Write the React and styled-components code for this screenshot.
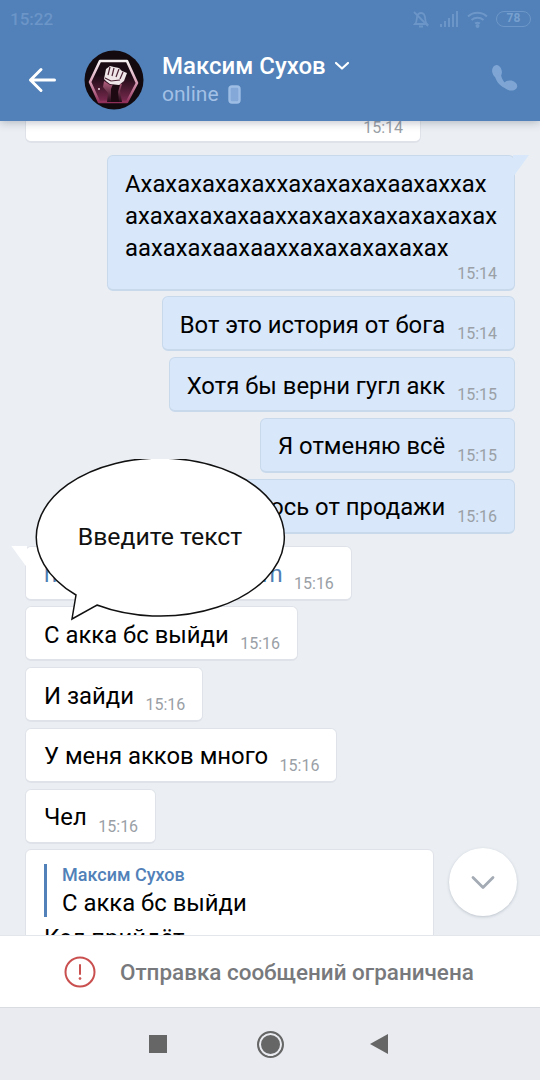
import React from "react";
import styled, { createGlobalStyle } from "styled-components";

const GlobalStyle = createGlobalStyle`
  html, body {
    margin: 0;
    padding: 0;
    background: #ebeff4;
  }
  * {
    box-sizing: border-box;
  }
`;

const messages = [
  { id: 1, out: false, text: "", time: "15:14", clipped: true, width: 396 },
  {
    id: 2,
    out: true,
    time: "15:14",
    tail: true,
    lines: ["Ахахахахахаххахахахахаахаххах", "ахахахахахааххахахахахахахахах", "аахахахаахааххахахахахахах"],
  },
  { id: 3, out: true, text: "Вот это история от бога", time: "15:14" },
  { id: 4, out: true, text: "Хотя бы верни гугл акк", time: "15:15" },
  { id: 5, out: true, text: "Я отменяю всё", time: "15:15" },
  { id: 6, out: true, text: "Отказываюсь от продажи", time: "15:16" },
  { id: 7, out: false, text: "https://my.google.com", time: "15:16", link: true, tail: true, first: true },
  { id: 8, out: false, text: "С акка бс выйди", time: "15:16" },
  { id: 9, out: false, text: "И зайди", time: "15:16" },
  { id: 10, out: false, text: "У меня акков много", time: "15:16" },
  { id: 11, out: false, text: "Чел", time: "15:16" },
];

const App = () => {
  return (
    <Page>
      <GlobalStyle />
      <Header>
        <StatusBar>
          <Clock>15:22</Clock>
          <StatusIcons>
            <svg width="20" height="20" viewBox="0 0 20 20" fill="none" stroke="#6c95c8" strokeWidth="1.8">
              <path d="M4 15c2-2 1.500-4 2-7 .5-2.500 2-4 4-4s3.500 1.500 4 4c.5 3 0 5 2 7z" />
              <path d="M8 17.500h4M3 3l14 14" />
            </svg>
            <svg width="20" height="18" viewBox="0 0 20 18" fill="#6c95c8">
              <rect x="1" y="14" width="2" height="3" />
              <rect x="5" y="11" width="2" height="6" />
              <rect x="9" y="8" width="2" height="9" />
              <rect x="13" y="4" width="2" height="13" />
              <rect x="17" y="1" width="2" height="16" />
            </svg>
            <svg width="21" height="17" viewBox="0 0 21 17" fill="none" stroke="#6e97c9" strokeWidth="2">
              <path d="M1 5.500c5.500-5 13.500-5 19 0M4.500 9c3.500-3 8.500-3 12 0" />
              <path d="M8 12.500c1.500-1 3.500-1 5 0" />
              <circle cx="10.500" cy="15" r="1" fill="#6e97c9" />
            </svg>
            <Battery>78</Battery>
          </StatusIcons>
        </StatusBar>
        <Toolbar>
          <BackButton>
            <svg width="28" height="26" viewBox="0 0 28 26" fill="none" stroke="#fff" strokeWidth="3" strokeLinecap="round" strokeLinejoin="round">
              <path d="M26.500 13H2.500M13 2.500 2.500 13 13 23.500" />
            </svg>
          </BackButton>
          <svg width="60" height="60" viewBox="0 0 60 60">
            <defs>
              <linearGradient id="shield" x1="0" y1="0" x2="0" y2="1">
                <stop offset="0" stopColor="#f6f0f2" />
                <stop offset="0.5" stopColor="#dba3b9" />
                <stop offset="1" stopColor="#8f2f5a" />
              </linearGradient>
              <linearGradient id="inner" x1="0" y1="0" x2="0" y2="1">
                <stop offset="0.35" stopColor="#1a0a13" />
                <stop offset="1" stopColor="#7c2a50" />
              </linearGradient>
              <linearGradient id="arm" x1="0" y1="0" x2="0" y2="1">
                <stop offset="0" stopColor="#b56080" />
                <stop offset="1" stopColor="#240a18" />
              </linearGradient>
            </defs>
            <circle cx="30" cy="30" r="29.500" fill="#120a0f" />
            <path d="M16 11h27l10 22-10 19H15L6 32z" fill="url(#inner)" stroke="url(#shield)" strokeWidth="2.600" strokeLinejoin="round" />
            <path d="M20 31l6 4 12-1-2 7 2 11H23l1-9-5-6z" fill="url(#arm)" />
            <path d="M27 39l2-5 7 1-2 7 1 10h-8z" fill="#1c0912" />
            <path d="M20 29l2-10 4-3 4 1 5 1 3 3 5 2-3 8-5 4-9-1-4-3z" fill="#eee6e8" />
            <path d="M26 17l-2 8M30 18l-2 8M35 19l-3 8M39 22l-3 7M21 28l6 3 9-1" stroke="#4a2235" strokeWidth="1.200" fill="none" />
            <circle cx="15" cy="39" r="1" fill="#f2d9e2" />
          </svg>
          <Peer>
            <PeerName>
              Максим Сухов
              <svg width="16" height="10" viewBox="0 0 16 10" fill="none" stroke="#fff" strokeWidth="2.200" strokeLinecap="round" strokeLinejoin="round">
                <path d="M2 2l6 5.500L14 2" />
              </svg>
            </PeerName>
            <PeerStatus>
              online
              <svg width="13" height="19" viewBox="0 0 13 19" fill="none">
                <rect x="1.500" y="1.500" width="10" height="16" rx="2.500" fill="#84a8d8" stroke="#9dbde4" strokeWidth="2.400" />
              </svg>
            </PeerStatus>
          </Peer>
          <CallButton>
            <svg width="27" height="26" viewBox="0 0 27 26" fill="#7fa5d4">
              <ellipse cx="6" cy="6.500" rx="4.800" ry="6.500" transform="rotate(-12 6 6.500)" />
              <ellipse cx="19.500" cy="20.500" rx="6.800" ry="5" transform="rotate(12 19.500 20.500)" />
              <path d="M4 11c1 6 6 11 12 13l2-4c-4-1-7-5-8-10z" />
            </svg>
          </CallButton>
        </Toolbar>
      </Header>

      <History>
        {messages.map((m) => (
          <Bubble key={m.id} $out={m.out} $tail={m.tail} $first={m.first} $clipped={m.clipped} $width={m.width} $multi={!!m.lines}>
            {m.lines ? (
              <Lines>
                {m.lines.map((line) => (
                  <div key={line}>{line}</div>
                ))}
              </Lines>
            ) : (
              <BubbleText $link={m.link}>{m.text}</BubbleText>
            )}
            <Time $clipped={m.clipped}>{m.time}</Time>
          </Bubble>
        ))}
        <ReplyBubble>
          <Quote>
            <QuoteAuthor>Максим Сухов</QuoteAuthor>
            <QuoteText>С акка бс выйди</QuoteText>
          </Quote>
          <ReplyText>Кел прийдёт</ReplyText>
        </ReplyBubble>
        <ScrollDown>
          <svg width="24" height="15" viewBox="0 0 24 15" fill="none" stroke="#a4abb4" strokeWidth="2.800" strokeLinecap="round" strokeLinejoin="round">
            <path d="M2 2.500l10 10 10-10" />
          </svg>
        </ScrollDown>
        <Balloon>
          <svg width="256" height="166" viewBox="0 0 256 166">
            <path d="M41 136A124 79 0 1 1 62 146L37 160Z" fill="#fff" stroke="#111" strokeWidth="1.500" strokeLinejoin="miter" />
          </svg>
          <BalloonText>Введите текст</BalloonText>
        </Balloon>
      </History>

      <Notice>
        <svg width="32" height="32" viewBox="0 0 32 32" fill="none" stroke="#c9504f">
          <circle cx="16" cy="16" r="14.500" strokeWidth="2" />
          <path d="M16 9v9" strokeWidth="2" strokeLinecap="round" />
          <circle cx="16" cy="22.500" r="1" fill="#c9504f" strokeWidth="0.800" />
        </svg>
        <NoticeText>Отправка сообщений ограничена</NoticeText>
      </Notice>

      <NavBar>
        <NavSquare />
        <NavCircle />
        <NavBack />
      </NavBar>
    </Page>
  );
};

export default App;

const Page = styled.div`
  width: 540px;
  height: 1080px;
  display: flex;
  flex-direction: column;
  overflow: hidden;
  background: #ebeff4;
  font-family: Roboto, "Noto Sans", sans-serif;
  color: #000;
`;

const Header = styled.header`
  position: relative;
  z-index: 2;
  height: 121px;
  flex-shrink: 0;
  background: #5181b8;
  box-shadow: 0 2px 8px rgba(60, 70, 90, 0.3);
`;

const StatusBar = styled.div`
  height: 38px;
  padding: 0 0 0 10px;
  display: flex;
  align-items: center;
  justify-content: space-between;
`;

const Clock = styled.div`
  font-size: 17px;
  font-weight: 500;
  color: #6c95c8;
`;

const StatusIcons = styled.div`
  display: flex;
  align-items: center;
  gap: 8px;
  padding-right: 9px;
`;

const Battery = styled.div`
  width: 35px;
  height: 16px;
  border: 1.500px solid #6e97c9;
  border-radius: 8px;
  font-size: 12px;
  font-weight: 700;
  line-height: 13px;
  text-align: center;
  color: #78a0cf;
`;

const Toolbar = styled.div`
  height: 83px;
  padding: 0 22px 0 28px;
  display: flex;
  align-items: center;
`;

const BackButton = styled.div`
  width: 56px;
  display: flex;
  align-items: center;
`;

const Peer = styled.div`
  flex: 1;
  margin-left: 18px;
  display: flex;
  flex-direction: column;
`;

const PeerName = styled.div`
  display: flex;
  align-items: center;
  gap: 8px;
  font-size: 24px;
  font-weight: 500;
  line-height: 29px;
  color: #fff;
`;

const PeerStatus = styled.div`
  display: flex;
  align-items: center;
  gap: 9px;
  font-size: 21px;
  line-height: 27px;
  color: #a3c0e6;
`;

const CallButton = styled.div`
  display: flex;
  align-items: center;
  margin-top: -3px;
`;

const History = styled.main`
  position: relative;
  flex: 1;
  min-height: 0;
  overflow: hidden;
  padding: 0 25px;
  display: flex;
  flex-direction: column;
  gap: 5.750px;
`;

const Bubble = styled.div`
  position: relative;
  flex-shrink: 0;
  align-self: ${(props) => (props.$out ? "flex-end" : "flex-start")};
  width: ${(props) => (props.$width ? `${props.$width}px` : "auto")};
  height: ${(props) => (props.$multi ? "135.500px" : "55px")};
  margin-top: ${(props) => {
    if (props.$clipped) return "-33px";
    if (props.$first || props.$multi) return "6.250px";
    return "0";
  }};
  padding: ${(props) => {
    if (props.$multi) return "12px 17px 0";
    return props.$out ? "0 17px" : "0 17px 0 18px";
  }};
  display: flex;
  flex-direction: ${(props) => (props.$multi ? "column" : "row")};
  align-items: ${(props) => (props.$multi ? "flex-end" : "flex-start")};
  justify-content: ${(props) => (props.$clipped ? "flex-end" : "flex-start")};
  gap: ${(props) => {
    if (props.$multi) return "0";
    return props.$out ? "12px" : "11.500px";
  }};
  border-radius: 6px;
  border: 1px solid ${(props) => (props.$out ? "#c8d9ec" : "#dfe3e9")};
  border-bottom-width: 2px;
  background: ${(props) => (props.$out ? "#d8e7f9" : "#fff")};

  &::after {
    content: ${(props) => (props.$tail ? '""' : "none")};
    position: absolute;
    top: -1px;
    ${(props) => (props.$out ? "left: calc(100% - 1px);" : "right: calc(100% - 1px);")}
    width: 16px;
    height: 22px;
    background: ${(props) => (props.$out ? "#d8e7f9" : "#fff")};
    clip-path: ${(props) =>
      props.$out ? "polygon(0 0, 100% 0, 0 100%)" : "polygon(0 0, 100% 0, 100% 100%)"};
  }
`;

const BubbleText = styled.div`
  padding-top: 12.500px;
  font-size: 23.850px;
  line-height: 30px;
  white-space: nowrap;
  letter-spacing: ${(props) => (props.$link ? "-0.08px" : "0")};
  color: ${(props) => (props.$link ? "#4f7fb5" : "#000")};
`;

const Lines = styled.div`
  align-self: flex-start;
  font-size: 23.850px;
  line-height: 32px;
  white-space: nowrap;
`;

const Time = styled.div`
  font-size: 16px;
  line-height: 20px;
  color: #9aa0a6;
  align-self: flex-end;
  padding-bottom: ${(props) => (props.$clipped ? "3px" : "5px")};
`;

const ReplyBubble = styled.div`
  flex-shrink: 0;
  width: 409px;
  padding: 14px 18px;
  border-radius: 6px;
  border: 1px solid #dfe3e9;
  background: #fff;
`;

const Quote = styled.div`
  border-left: 3px solid #5181b8;
  padding-left: 15px;
`;

const QuoteAuthor = styled.div`
  font-size: 18px;
  font-weight: 500;
  line-height: 22px;
  color: #5181b8;
`;

const QuoteText = styled.div`
  margin-top: 3px;
  font-size: 23.850px;
  line-height: 28px;
`;

const ReplyText = styled.div`
  margin-top: 6px;
  font-size: 23.850px;
  line-height: 30px;
`;

const ScrollDown = styled.div`
  position: absolute;
  left: 449px;
  top: 727px;
  width: 68px;
  height: 68px;
  display: flex;
  align-items: center;
  justify-content: center;
  border-radius: 50%;
  background: #fff;
  box-shadow: 0 1px 3px rgba(60, 70, 90, 0.25);
`;

const Balloon = styled.div`
  position: absolute;
  left: 35px;
  top: 338px;
  width: 256px;
  height: 166px;
`;

const BalloonText = styled.div`
  position: absolute;
  left: 0;
  right: 6px;
  top: 62px;
  text-align: center;
  font-size: 24.800px;
  line-height: 32px;
  color: #111;
`;

const Notice = styled.div`
  height: 73px;
  flex-shrink: 0;
  padding-left: 64px;
  display: flex;
  align-items: center;
  gap: 24px;
  background: #fff;
  border-top: 1px solid #e3e6ea;
  border-bottom: 1px solid #d9dce1;
`;

const NoticeText = styled.div`
  font-size: 22.450px;
  font-weight: 500;
  color: #77797c;
`;

const NavBar = styled.nav`
  height: 72px;
  flex-shrink: 0;
  padding-left: 149px;
  display: flex;
  align-items: center;
  background: #e9ebf0;
`;

const NavSquare = styled.div`
  width: 18px;
  height: 18px;
  background: #666;
`;

const NavCircle = styled.div`
  width: 27px;
  height: 27px;
  margin-left: 90px;
  border-radius: 50%;
  background: #666;
  border: 2px solid #666;
  box-shadow: inset 0 0 0 2px #e9ebf0;
`;

const NavBack = styled.div`
  width: 18px;
  height: 20px;
  margin-left: 86px;
  background: #666;
  clip-path: polygon(100% 0, 100% 100%, 0 50%);
`;
